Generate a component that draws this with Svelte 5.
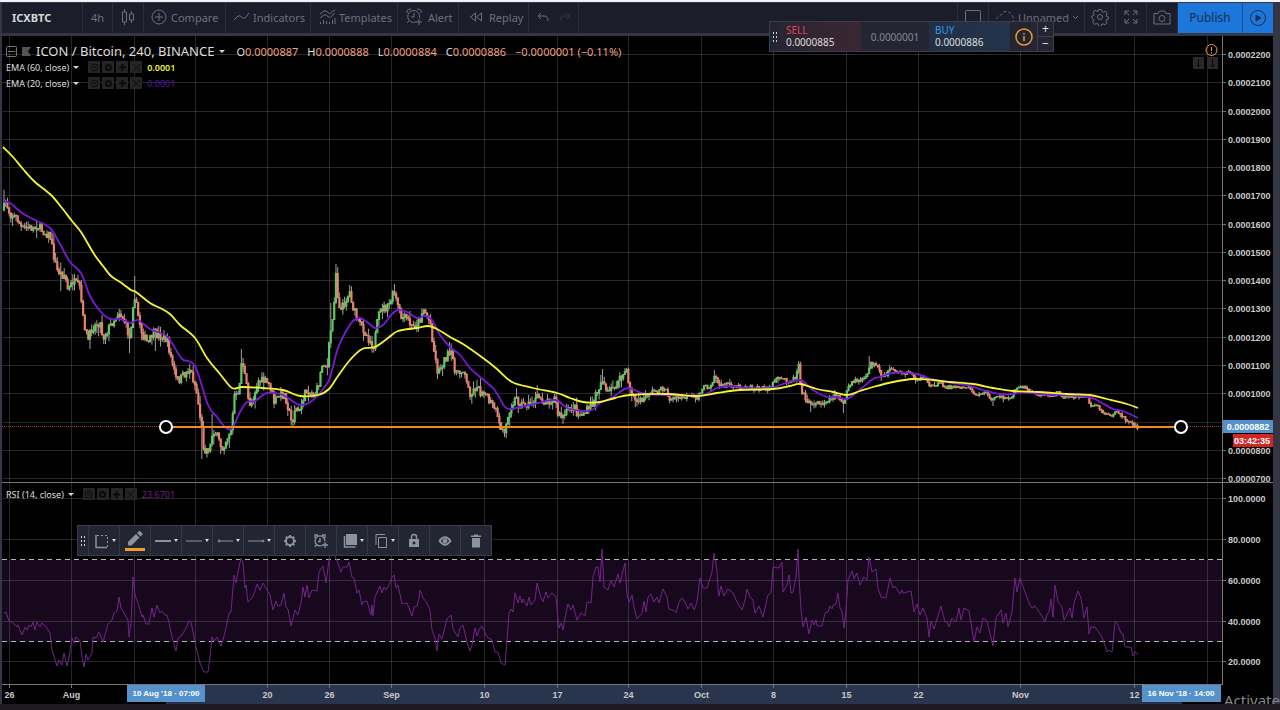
<script>
  let activeTool = "color";

  const tools = ["template", "color", "width", "style", "left end", "right end", "settings", "alert", "order", "clone", "lock", "hide", "remove"];
  const carets = ["template", "width", "style", "left end", "right end", "order", "clone"];

  const priceTicks = Array.from({ length: 16 }, (_, i) => ({
    y: 55 + Math.round(i * 28.27),
    label: ((22 - i) / 100000).toFixed(7),
  })).filter((t) => t.label !== "0.0000900");
  const priceGrid = Array.from({ length: 16 }, (_, i) => 54.5 + Math.round(i * 28.27));

  const rsiTicks = [
    { y: 498.5, label: "100.0000" },
    { y: 539.5, label: "80.0000" },
    { y: 580.5, label: "60.0000" },
    { y: 621.5, label: "40.0000" },
    { y: 661.5, label: "20.0000" },
  ];

  const timeTicks = [
    [9.5, "26"], [71.5, "Aug"], [134.5, ""], [195.5, ""], [267.5, "20"], [329.5, "26"],
    [391.5, "Sep"], [484.5, "10"], [557.5, "17"], [628.5, "24"], [701.5, "Oct"], [773.5, "8"],
    [846.5, "15"], [918.5, "22"], [1020.5, "Nov"], [1134.5, "12"], [1207.5, ""],
  ];

  const ema60 =
    "3,147 13,157 23,169 35,182 51,195 62,208 72,221 81,232 94,254 103,266 111,276 120,282 131,290 136,292 150,303 160,308 170,314 180,325 195,338 207,358 220,374 232,388 242,387 263,388 283,390 300,396 318,395 329,389 338,376 350,360 362,349 375,347 388,338 398,331 417,328 428,326 437,329 450,337 463,344 483,358 497,369 512,382 533,388 557,393 570,398 583,402 600,402 615,398 630,395 667,394 697,396 717,393 740,390 773,389 790,386 800,384 817,389 833,392 847,395 860,391 873,387 893,382 913,379 933,380 950,382 973,384 993,388 1013,391 1040,392 1067,394 1090,395 1107,399 1127,404 1138,408";

  const ema20 =
    "3,202 10,203 22,213 35,220 50,228 60,244 70,262 81,273 90,296 100,311 110,319 120,319 131,323 138,320 150,329 165,335 172,343 182,359 195,366 208,405 217,417 225,427 232,428 240,412 247,402 255,401 267,393 283,395 300,405 313,400 328,382 332,370 338,348 345,333 353,321 360,318 367,322 375,328 383,325 392,314 398,310 407,312 417,318 425,316 432,320 440,335 450,347 460,355 470,368 480,377 493,388 499,397 505,407 510,409 520,407 530,405 555,400 567,408 583,411 592,410 600,403 613,397 628,388 647,394 700,395 717,388 730,386 747,388 770,388 783,384 800,380 813,390 827,397 837,397 847,399 857,392 873,379 880,377 893,373 917,374 928,378 947,382 970,386 983,390 1000,394 1013,394 1022,392 1040,394 1087,397 1100,402 1113,409 1123,411 1138,418";

  const rsi =
    "4,613 6,612 9,621 13,623 17,627 18,625 22,635 25,627 27,630 29,625 31,627 33,622 35,630 37,622 40,627 42,623 46,627 50,633 52,650 57,666 59,660 62,665 64,653 67,666 69,658 72,638 74,643 76,637 80,641 82,657 84,667 86,654 88,660 92,653 93,637 96,638 99,632 103,642 108,624 112,620 114,613 117,611 119,597 121,608 128,620 129,637 131,623 133,577 135,595 138,603 142,617 143,615 146,624 149,624 152,608 154,617 157,605 160,613 162,611 165,615 167,615 169,623 172,637 176,651 178,638 182,635 186,628 189,621 191,622 193,632 196,647 200,663 204,672 208,672 210,657 212,637 214,641 217,637 221,646 223,640 226,628 229,613 231,612 234,575 236,583 238,572 241,558 243,563 245,588 246,585 248,602 253,597 257,584 260,590 263,583 270,595 273,610 276,601 278,606 281,605 284,593 286,607 288,609 291,626 295,610 298,615 301,603 303,587 305,597 307,585 309,598 312,590 317,591 319,572 323,566 326,583 329,560 331,546 336,558 341,572 343,567 347,567 349,562 352,577 354,578 357,593 359,590 362,605 363,602 367,601 371,615 372,605 373,616 375,597 380,586 382,593 384,587 386,590 389,585 392,577 394,575 396,588 398,585 402,604 407,603 412,616 414,607 417,606 419,598 420,590 423,598 427,603 430,610 432,630 435,638 437,651 439,634 442,639 447,619 451,615 453,629 458,637 460,628 463,625 467,642 470,651 472,645 475,628 477,636 479,630 482,626 487,637 492,640 495,652 498,652 501,663 505,665 507,640 509,613 511,609 513,612 515,593 518,603 520,596 522,603 523,599 527,606 529,597 531,605 535,600 537,583 540,595 543,602 546,592 548,598 552,593 556,597 558,620 559,628 561,623 563,630 565,618 568,604 571,610 573,605 577,620 581,613 585,616 587,602 591,603 593,577 596,567 598,567 600,582 602,549 604,587 608,590 611,580 614,587 618,574 620,583 625,563 627,595 629,602 632,595 634,607 637,619 642,613 644,601 646,612 648,597 651,594 654,602 657,597 659,603 663,589 667,597 669,609 673,610 676,613 679,602 682,598 685,602 688,609 691,603 694,610 697,602 700,578 703,588 707,588 712,572 714,553 717,570 718,590 719,596 721,586 724,596 728,589 733,593 737,602 742,610 745,600 747,589 750,597 753,600 755,613 759,606 763,617 765,608 768,595 771,593 773,567 779,568 782,562 783,592 787,585 789,575 791,593 793,592 796,577 798,549 799,577 801,610 803,627 806,617 809,634 812,620 814,625 816,620 817,626 822,626 825,613 828,612 830,606 832,609 833,605 836,604 838,593 840,608 842,612 844,628 846,610 848,580 852,571 854,579 857,573 860,585 864,577 867,580 869,557 872,572 876,569 878,588 881,597 886,598 890,578 893,588 895,586 900,594 902,590 903,593 911,591 914,612 917,604 920,615 923,608 927,618 929,637 931,621 934,629 941,606 945,622 947,622 949,627 952,618 956,622 959,608 961,620 964,608 969,611 972,630 974,642 977,627 980,633 983,618 987,621 993,646 996,618 1001,610 1003,623 1006,613 1008,627 1012,612 1014,588 1015,578 1017,592 1020,578 1025,592 1030,605 1032,608 1035,606 1040,613 1045,622 1047,615 1049,612 1051,599 1053,617 1055,585 1058,602 1062,607 1064,620 1070,608 1072,618 1074,603 1078,591 1081,598 1084,618 1087,607 1089,634 1091,627 1095,627 1102,637 1107,652 1109,650 1112,652 1113,643 1115,621 1117,623 1121,633 1123,634 1125,647 1131,647 1133,656 1135,652 1138,654";

  const path =
    "3,208 6,202 10,214 17,218 22,229 27,228 33,228 38,226 45,233 50,235 54,257 57,270 62,275 65,275 68,291 73,281 80,288 83,318 88,340 92,328 100,322 103,338 110,326 119,312 125,322 130,340 134,292 138,315 142,333 148,344 153,333 160,336 167,340 172,362 177,382 185,374 190,369 196,388 201,422 204,450 210,448 213,430 217,436 222,449 227,438 232,427 234,395 238,397 242,358 246,383 249,405 253,398 258,381 264,381 270,385 274,402 280,395 285,395 288,407 292,424 295,408 300,412 304,395 308,390 313,396 318,388 322,365 325,362 327,372 330,335 333,318 336,272 338,300 341,310 345,302 350,292 353,307 358,322 363,328 368,338 374,346 378,318 382,308 388,308 394,292 397,303 401,318 407,318 412,328 420,320 423,308 428,318 431,325 433,345 438,373 443,362 448,355 452,355 455,370 458,375 464,368 467,385 471,395 477,385 480,393 484,390 488,400 495,408 499,425 505,433 508,415 511,406 516,398 520,404 530,405 538,397 545,402 555,398 558,415 563,417 570,408 575,408 578,415 585,413 592,405 597,392 603,378 607,395 613,388 620,380 626,370 630,388 636,402 643,400 650,392 660,390 665,388 670,400 677,398 690,397 697,398 702,388 710,386 715,375 720,387 728,384 740,387 747,386 758,389 770,388 775,380 783,379 790,381 795,378 799,363 801,390 805,397 810,405 817,402 820,405 827,400 838,395 844,405 848,388 853,382 860,380 867,378 870,362 877,367 882,378 887,375 890,368 900,373 912,373 915,379 925,379 930,386 940,383 945,387 970,387 975,396 985,392 993,400 1000,396 1010,400 1015,389 1023,387 1035,394 1055,396 1057,392 1065,398 1080,396 1088,399 1090,405 1097,406 1105,414 1113,415 1117,411 1125,419 1130,421 1135,427 1139,427";

  // long wicks: x -> extreme y
  const spikes = [[4, 190], [61, 291], [90, 349], [134, 276], [130, 353], [156, 351], [201, 459], [212, 414], [242, 349], [293, 428], [336, 264], [331, 303], [350, 285], [394, 284], [363, 341], [449, 342], [505, 437], [516, 388], [537, 385], [603, 369], [626, 368], [715, 370], [799, 361], [811, 412], [844, 413], [869, 356], [993, 406]];

  const toPoints = (text) => text.split(" ").map((p) => p.split(",").map(Number));

  // Catmull-Rom spline through the points
  const curve = (text) => {
    const p = toPoints(text);
    let d = `M${p[0]}`;
    for (let i = 0; i < p.length - 1; i++) {
      const a = p[i - 1] || p[i];
      const b = p[i];
      const c = p[i + 1];
      const e = p[i + 2] || c;
      d += `C${b[0] + (c[0] - a[0]) / 6},${b[1] + (c[1] - a[1]) / 6} ${c[0] - (e[0] - b[0]) / 6},${c[1] - (e[1] - b[1]) / 6} ${c}`;
    }
    return d;
  };

  const points = toPoints(path);
  let seed = 7;
  const rand = () => {
    seed = (seed * 16807) % 2147483647;
    return seed / 2147483647;
  };
  const priceAt = (x) => {
    const i = Math.max(1, points.findIndex((p) => p[0] >= x));
    const [x0, y0] = points[i - 1];
    const [x1, y1] = points[i];
    return y0 + ((y1 - y0) * (x - x0)) / (x1 - x0);
  };

  const step = 1.72;
  let candles = [];
  let prev = 210;
  for (let x = 4; x < 1139; x += step) {
    const amp = x < 640 ? 5 : x < 890 ? 3 : 2;
    const open = prev;
    const close = priceAt(x) + (rand() - 0.5) * amp * 1.6;
    let high = Math.min(open, close) - rand() * rand() * amp * 2;
    let low = Math.max(open, close) + rand() * rand() * amp * 2;
    for (const [sx, sy] of spikes) {
      if (Math.abs(sx - x) < step / 2) {
        high = Math.min(high, sy);
        low = Math.max(low, sy);
      }
    }
    candles.push({ x, open, close, high, low, up: close < open });
    prev = close;
  }
</script>

<div class="app">
  <header class="topbar">
    <button class="item symbol">ICXBTC</button>
    <button class="item interval">4h</button>
    <button class="item narrow" aria-label="Chart style">
      <svg width="14" height="18" viewBox="0 0 14 18"><path d="M3.500 1v3M3.500 14v3M10.500 3v3M10.500 12v3M1.500 4h4v10h-4zM8.500 6h4v6h-4z" /></svg>
    </button>
    <button class="item compare">
      <svg width="16" height="16" viewBox="0 0 16 16"><circle cx="8" cy="8" r="7" /><path d="M8 4v8M4 8h8" /></svg>
      Compare
    </button>
    <button class="item indicators">
      <svg width="17" height="12" viewBox="0 0 17 12"><path d="M1 9l4-4q2-1 3.500 1t3.500 1l4-5" /></svg>
      Indicators
    </button>
    <button class="item templates">
      <svg width="17" height="16" viewBox="0 0 17 16"><path d="M1 5l4-3q2-1 4 1.500t3 0L16 1M1 9l4-3q2-1 4 1.500t3 0L16 4M1.500 13v2M4.500 11v4M7.500 12v3M10.500 13v2M13.500 11v4M16 9v6" /></svg>
      Templates
    </button>
    <button class="item alert">
      <svg width="17" height="18" viewBox="0 0 17 18"><path d="M10 14A6 6 0 1 1 13.500 10M8 5v4H5M1 5q-1-4 4-4M11 1q5 0 4 4M3 13l-2 2M13 11v6M10 14h6" /></svg>
      Alert
    </button>
    <button class="item replay">
      <svg width="14" height="10" viewBox="0 0 14 10"><path d="M6.500 1v8L1.500 5zM12.500 1v8L7.500 5z" /></svg>
      Replay
    </button>
    <div class="item history">
      <button aria-label="Undo"><svg width="12" height="10" viewBox="0 0 12 10"><path d="M4 1L1 4l3 3M1 4h6q4 0 4 5" /></svg></button>
      <button class="off" aria-label="Redo"><svg width="12" height="10" viewBox="0 0 12 10"><path d="M8 1l3 3-3 3M11 4H5Q1 4 1 9" /></svg></button>
    </div>
    <div class="spacer"></div>
    <button class="item narrow" aria-label="Layout"><svg width="16" height="14" viewBox="0 0 16 14"><rect x="0.500" y="0.500" width="15" height="13" rx="1" /></svg></button>
    <button class="item layout">
      <svg width="20" height="14" viewBox="0 0 20 14"><path stroke-dasharray="3 2" d="M4 13Q0 11 2 8q1-2 4-3 4-6 9-2 3 2 3 5 2 3-2 5z" /></svg>
      Unnamed
      <svg class="chevron" width="7" height="5" viewBox="0 0 7 5"><path d="M1 1l2.500 2.500L6 1" /></svg>
    </button>
    <button class="item narrow" aria-label="Settings">
      <svg width="18" height="18" viewBox="0 0 18 18"><circle cx="9" cy="9" r="2.500" /><path d="M7.500 1.500h3l.5 2 1.500.7 2-1 1.700 2-1 1.800.5 1.500 1.800.5v2l-2 .6-.6 1.500 1 1.800-2 2-1.800-1-1.600.6-.5 1.800h-2.500L7 16l-1.500-.6-1.800 1-2-2 1-1.800-.6-1.500L.800 10V8l1.700-.5.6-1.500-1-1.800 1.800-2 2 1L7 3.500z" /></svg>
    </button>
    <button class="item narrow" aria-label="Fullscreen">
      <svg width="14" height="14" viewBox="0 0 14 14"><path d="M1 5V1h4M1 1l4 4M9 1h4v4M13 1L9 5M1 9v4h4M1 13l4-4M13 9v4H9M13 13L9 9" /></svg>
    </button>
    <button class="item narrow" aria-label="Snapshot">
      <svg width="18" height="15" viewBox="0 0 18 15"><path d="M1 3.500h4l1.500-2.500h5L13 3.500h4v10.500H1z" /><circle cx="9" cy="8.500" r="3" /></svg>
    </button>
    <button class="publish">Publish</button>
    <button class="publish play" aria-label="Play">
      <svg width="18" height="18" viewBox="0 0 18 18"><circle cx="9" cy="9" r="7.500" /><path class="fill" d="M7 6l5 3-5 3z" /></svg>
    </button>
  </header>

  <main class="chart">
    <svg class="plot" viewBox="2 36 1271 668" role="img" aria-label="ICON / Bitcoin chart">
      <rect class="axisband" x="166" y="685" width="1016" height="19" />
      <rect class="rsiband" x="2" y="560" width="1220" height="82" />
      <g class="grid">
        {#each priceGrid as y}<line x1="2" x2="1222" y1={y} y2={y} />{/each}
        {#each rsiTicks as t}<line x1="2" x2="1222" y1={t.y} y2={t.y} />{/each}
        {#each timeTicks as [x]}<line x1={x} x2={x} y1="36" y2="684" />{/each}
      </g>
      <path class="levels" d="M2 559.500H1222M2 641.500H1222" />
      <polyline class="rsi" points={rsi} />

      {#each candles as c}
        <line class="wick" x1={c.x} x2={c.x} y1={c.high} y2={c.low} />
      {/each}
      {#each candles as c}
        <rect class={c.up ? "up" : "down"} x={c.x - 1.1} width="2.2" y={Math.min(c.open, c.close) - 0.5} height={Math.abs(c.open - c.close) + 1} />
      {/each}
      <path class="ema20" d={curve(ema20)} />
      <path class="ema60" d={curve(ema60)} />

      <path class="last" d="M2 426.500H1222" />
      <line class="ray" x1="166" x2="1181" y1="427" y2="427" />
      <circle class="anchor" cx="166" cy="427" r="6" />
      <circle class="anchor" cx="1181" cy="427" r="6" />

      <path class="frame" d="M2 482.500H1273M2 684.500H1222M1222.500 36V685" />
      <g class="scale">
        {#each priceTicks as t}
          <path d="M1222 {t.y - 0.5}h4" />
          <text x="1228" y={t.y + 3}>{t.label}</text>
        {/each}
        {#each rsiTicks as t}
          <path d="M1222 {t.y}h4" />
          <text x="1228" y={t.y + 3.5}>{t.label}</text>
        {/each}
      </g>
      <g class="scale time">
        {#each timeTicks as [x, label]}
          <path d="M{x} 685v3" />
          <text {x} y="698">{label}</text>
        {/each}
      </g>
      <rect class="blue" x="1223" y="420" width="50" height="13" />
      <rect class="red" x="1233" y="434" width="40" height="13" />
      <rect class="blue" x="127" y="685" width="78" height="17" />
      <rect class="blue" x="1142" y="685" width="79" height="17" />
      <g class="badge">
        <text x="1248" y="430">0.0000882</text>
        <text x="1252" y="444">03:42:35</text>
        <text class="date" x="166" y="696">10 Aug '18 · 07:00</text>
        <text class="date" x="1181" y="696">16 Nov '18 · 14:00</text>
      </g>
      <g class="corner">
        <rect x="1193" y="57" width="11" height="12" />
        <rect x="1207" y="57" width="11" height="12" />
        <path d="M1198.500 59v8M1196.500 65l2 2 2-2M1212.500 59v8M1210.500 65l2 2 2-2" />
      </g>
      <g class="warn"><circle cx="1211.500" cy="50" r="5.500" /><path d="M1211.500 47v4M1211.500 52v1.500" /></g>
    </svg>

    <section class="legend">
      <div class="title">
        <svg width="11" height="11" viewBox="0 0 11 11"><rect x="0.500" y="0.500" width="10" height="10" rx="1" /><path d="M2 5.500h7" /></svg>
        <svg class="flag" width="9" height="9" viewBox="0 0 9 9"><path d="M0 0h9L6 4.500 9 9H0z" /></svg>
        <span class="name">ICON / Bitcoin, 240, BINANCE</span>
        <i class="caret"></i>
        <span class="ohlc first">O<b>0.0000887</b></span>
        <span class="ohlc">H<b>0.0000888</b></span>
        <span class="ohlc">L<b>0.0000884</b></span>
        <span class="ohlc">C<b>0.0000886</b></span>
        <span class="ohlc"><b>−0.0000001 (−0.11%)</b></span>
      </div>
      {@render study("EMA (60, close)", "0.0001", "yellow")}
      {@render study("EMA (20, close)", "0.0001", "violet")}
    </section>

    <section class="legend lower">
      {@render study("RSI (14, close)", "23.6701", "plum")}
    </section>

    <section class="trade">
      <i class="grip"></i>
      <button class="side sell"><span>SELL</span>0.0000885</button>
      <div class="spread">0.0000001</div>
      <button class="side buy"><span>BUY</span>0.0000886</button>
      <div class="info">
        <svg width="18" height="18" viewBox="0 0 18 18"><circle cx="9" cy="9" r="8" /><path d="M9 5v1.500M9 8v5" /></svg>
      </div>
      <div class="qty"><button>+</button><button>−</button></div>
    </section>

    <section class="drawbar">
      <i class="grip"></i>
      {#each tools as tool}
        <button class:active={tool === activeTool} aria-label={tool} on:click={() => (activeTool = tool)}>
          <svg class:solid={["color", "order", "lock", "remove"].includes(tool)} width="18" height="18" viewBox="0 0 18 18">
            {#if tool === "template"}
              <path stroke-width="1.500" d="M3 3v12.500h11" /><path stroke-dasharray="2 2" d="M4 3.500h10.500v12" />
            {:else if tool === "color"}
              <path d="M2 12L10 4l3.500 3.500-8 8H2zM11 3l2-2h1l2.500 2.500v1l-2 2z" />
            {:else if tool === "width"}
              <path stroke-width="2" d="M0 9h16" />
            {:else if tool === "style"}
              <path d="M0 9h16" />
            {:else if tool === "left end"}
              <path d="M2 9h14" /><circle cx="2" cy="9" r="1" />
            {:else if tool === "right end"}
              <path d="M0 9h15" /><circle cx="15" cy="9" r="1" />
            {:else if tool === "settings"}
              <circle stroke-width="2" cx="9" cy="9" r="4" /><path stroke-width="2" d="M9 3v2M9 13v2M3 9h2M13 9h2M4.800 4.800L6 6M12 12l1.200 1.200M4.800 13.200L6 12M12 6l1.200-1.200" />
            {:else if tool === "alert"}
              <path stroke-width="1.300" d="M10 13.500A5 5 0 1 1 13 9M8 6v3.500H6M3 6V3h3M10 3h3v3M4 13l-1 2M13 10v6M10 13h6" />
            {:else if tool === "order"}
              <path d="M5 2h11v11H5z" /><path class="stroke" d="M3.500 4v11h11" />
            {:else if tool === "clone"}
              <path d="M6.500 5.500h8v10h-8zM4 13V2.500h9" />
            {:else if tool === "lock"}
              <path fill-rule="evenodd" d="M4 7h10v8H4zM9 9.500a1.500 1.500 0 1 0 .1 0z" /><path class="stroke" d="M6.500 7V5q0-2.500 2.500-2.500T11.500 5v2" />
            {:else if tool === "hide"}
              <path stroke-width="2" d="M3.500 9Q9 1.500 14.500 9 9 16.500 3.500 9z" /><circle class="dot" cx="9" cy="9" r="2" />
            {:else}
              <path d="M4 3.500h3V2.500h4v1h3V5H4zM5 6h8v9.500H5z" />
            {/if}
          </svg>
          {#if carets.includes(tool)}<i class="caret"></i>{/if}
        </button>
      {/each}
    </section>
  </main>

  <p class="watermark">Activate</p>
</div>

{#snippet study(name, value, tone)}
  <div class="study">
    <span>{name}</span>
    <i class="caret"></i>
    <span class="minis">
      <button aria-label="Hide"><svg width="9" height="9" viewBox="0 0 9 9"><circle cx="4.500" cy="4.500" r="3.500" /><circle cx="4.500" cy="4.500" r="1" /></svg></button>
      <button aria-label="Format"><svg width="9" height="9" viewBox="0 0 9 9"><circle stroke-width="2" cx="4.500" cy="4.500" r="2.500" /></svg></button>
      <button aria-label="Add"><svg width="9" height="9" viewBox="0 0 9 9"><path stroke-width="2" d="M4.500 1v7M1 4.500h7" /></svg></button>
      <button aria-label="Remove"><svg width="9" height="9" viewBox="0 0 9 9"><path d="M1 1l7 7M8 1L1 8" /></svg></button>
    </span>
    <span class={tone}>{value}</span>
  </div>
{/snippet}

<style>
  :global(body) {
    background: #1c1923;
    overflow-x: hidden;
  }
  .app {
    position: relative;
    font-family: "Noto Sans", "Open Sans", sans-serif;
    background: #343644;
    border-top: 2px solid #f2f5f8;
    padding: 1px 7px 0 2px;
    color: #dedede;
  }
  button {
    font: inherit;
    color: inherit;
    background: none;
    border: 0;
    padding: 0;
    margin: 0;
    cursor: pointer;
  }
  svg {
    display: block;
    flex: none;
    fill: none;
    stroke: currentColor;
  }
  .topbar {
    display: flex;
    height: 30px;
    background: #1b1d2a;
    color: #6d707c;
    font-size: 11px;
  }
  .item {
    display: flex;
    align-items: center;
    gap: 6px;
    box-sizing: border-box;
    padding: 0 8px 2px;
    border-right: 1px solid #2b2d3a;
    white-space: nowrap;
    overflow: hidden;
  }
  .symbol {
    width: 81px;
    padding-left: 10px;
    font-weight: 700;
    color: #d5d7dc;
  }
  .interval,
  .narrow {
    width: 31px;
    padding: 0 0 2px;
    justify-content: center;
  }
  .interval {
    width: 30px;
  }
  .compare {
    width: 82px;
    padding: 0 7px 2px;
    gap: 4px;
  }
  .indicators {
    width: 85px;
    padding-left: 7px;
    gap: 3px;
  }
  .templates {
    width: 87px;
    gap: 3px;
  }
  .alert {
    width: 61px;
    gap: 5px;
  }
  .replay {
    width: 70px;
    padding-left: 10px;
  }
  .history {
    width: 50px;
    gap: 10px;
  }
  .off {
    opacity: 0.3;
  }
  .spacer {
    flex: 1;
    border-right: 1px solid #2b2d3a;
  }
  .layout {
    width: 96px;
    padding: 0 6px 2px;
    gap: 3px;
  }
  .chevron {
    margin-left: auto;
  }
  .publish {
    width: 64px;
    padding-bottom: 1px;
    background: #1d76da;
    color: #17304f;
    font-size: 12px;
  }
  .play {
    width: 31px;
    display: flex;
    align-items: center;
    justify-content: center;
    border-left: 1px solid #1a4f91;
  }
  .play .fill {
    fill: currentColor;
  }

  .chart {
    position: relative;
    margin-top: 3px;
    background: #000;
  }
  .plot {
    width: 100%;
    height: auto;
    stroke: none;
  }
  .axisband {
    fill: #29354d;
  }
  .rsiband {
    fill: #18081e;
  }
  .grid {
    stroke: #fff;
    stroke-opacity: 0.15;
  }
  .levels {
    stroke: #b9b3bd;
    stroke-dasharray: 5 4;
  }
  .rsi {
    stroke: #732488;
  }
  .wick {
    stroke: #9ca29e;
    stroke-width: 1;
  }
  .up {
    fill: #5cc962;
  }
  .down {
    fill: #ec8068;
  }
  .ema20 {
    stroke: #7a18d8;
    stroke-width: 1.8;
  }
  .ema60 {
    stroke: #f4f531;
    stroke-width: 1.8;
  }
  .last {
    stroke: #a5323a;
    stroke-dasharray: 1 1;
  }
  .ray {
    stroke: #f28a1e;
    stroke-width: 2;
  }
  .anchor {
    fill: #000;
    stroke: #fff;
    stroke-width: 2;
  }
  .frame {
    stroke: #777;
  }
  .scale path {
    stroke: #777;
  }
  .scale text,
  .badge text {
    font: bold 9px "Liberation Sans", Arial, sans-serif;
    fill: #c9c9c9;
  }
  .time text,
  .badge text {
    text-anchor: middle;
  }
  .badge text {
    fill: #fff;
  }
  .badge .date {
    font-size: 8px;
  }
  .blue {
    fill: #5592cb;
  }
  .red {
    fill: #d22626;
  }
  .corner rect {
    fill: #292929;
  }
  .corner path {
    stroke: #0a0a0a;
  }
  .warn {
    stroke: #e59a4e;
  }

  .legend {
    position: absolute;
    top: 7px;
    left: 4px;
    font-size: 9px;
  }
  .lower {
    top: 450px;
  }
  .title {
    display: flex;
    align-items: center;
    height: 16px;
    font-size: 13px;
    gap: 5px;
    white-space: nowrap;
    color: #dcdcdc;
  }
  .title svg {
    color: #777;
  }
  .title .flag {
    fill: #555;
    stroke: none;
  }
  .caret {
    border: 3px solid transparent;
    border-top-color: #d6d6d6;
    border-bottom: 0;
  }
  .ohlc {
    font-size: 11px;
    margin-left: 4px;
  }
  .first {
    margin-left: 6px;
  }
  .ohlc b {
    font-weight: 400;
    color: #f0a184;
  }
  .study {
    display: flex;
    align-items: center;
    gap: 4px;
    height: 16px;
    white-space: nowrap;
  }
  .minis {
    display: flex;
    gap: 2px;
    margin: 0 1px 0 5px;
  }
  .minis button {
    display: grid;
    place-items: center;
    width: 12px;
    height: 12px;
    background: #252525;
    color: #0b0b0b;
  }
  .yellow {
    color: #e8f03a;
    font-weight: 600;
  }
  .violet {
    color: #5a14a8;
  }
  .plum {
    color: #6d2280;
  }

  .trade,
  .drawbar {
    position: absolute;
    display: flex;
    box-sizing: border-box;
    background: #232632;
    border: 1px solid #3a3d4a;
  }
  .grip {
    flex: none;
    box-sizing: border-box;
    width: 10px;
    padding: 9px 2px;
    background-image: radial-gradient(circle, #d0d0d0 0.8px, transparent 1px);
    background-size: 3px 4px;
    background-clip: content-box;
    background-origin: content-box;
  }
  .trade {
    top: -15px;
    right: 219px;
    height: 31px;
    font-size: 10px;
  }
  .side {
    width: 81px;
    padding: 0 0 2px 6px;
    text-align: left;
    line-height: 12px;
    color: #dedede;
  }
  .side span {
    display: block;
  }
  .sell {
    background: linear-gradient(90deg, #2a2532, #3a2632);
  }
  .sell span {
    color: #e0465f;
  }
  .buy {
    background: linear-gradient(90deg, #222f45, #25344b);
  }
  .buy span {
    color: #3597e8;
  }
  .spread {
    display: grid;
    place-items: center;
    width: 68px;
    color: #858791;
  }
  .info {
    display: grid;
    place-items: center;
    width: 27px;
    color: #eb9a32;
  }
  .info svg {
    stroke-width: 1.5;
  }
  .qty {
    display: flex;
    flex-direction: column;
    width: 15px;
    border-left: 1px solid #3a3d4a;
  }
  .qty button {
    flex: 1;
    font-size: 12px;
    line-height: 14px;
  }
  .qty button + button {
    border-top: 1px solid #3a3d4a;
  }

  .drawbar {
    top: 489px;
    left: 75px;
    height: 31px;
    color: #8a939f;
  }
  .drawbar button {
    display: flex;
    align-items: center;
    justify-content: center;
    gap: 1px;
    position: relative;
    box-sizing: border-box;
    width: 31px;
    border-left: 1px solid #343744;
  }
  .drawbar .caret {
    border-width: 2px;
    border-bottom: 0;
    border-top-width: 3px;
  }
  .solid path {
    fill: currentColor;
    stroke: none;
  }
  .solid .stroke {
    fill: none;
    stroke: currentColor;
    stroke-width: 1.5;
  }
  .dot {
    fill: currentColor;
  }
  .active::after {
    content: "";
    position: absolute;
    left: 5px;
    right: 5px;
    bottom: 4px;
    height: 3px;
    background: #f29a2a;
  }
  .active svg {
    margin-bottom: 4px;
  }
  .watermark {
    position: absolute;
    right: 0;
    bottom: -6px;
    margin: 0;
    font-size: 15px;
    line-height: 20px;
    color: #85888e;
  }
</style>
